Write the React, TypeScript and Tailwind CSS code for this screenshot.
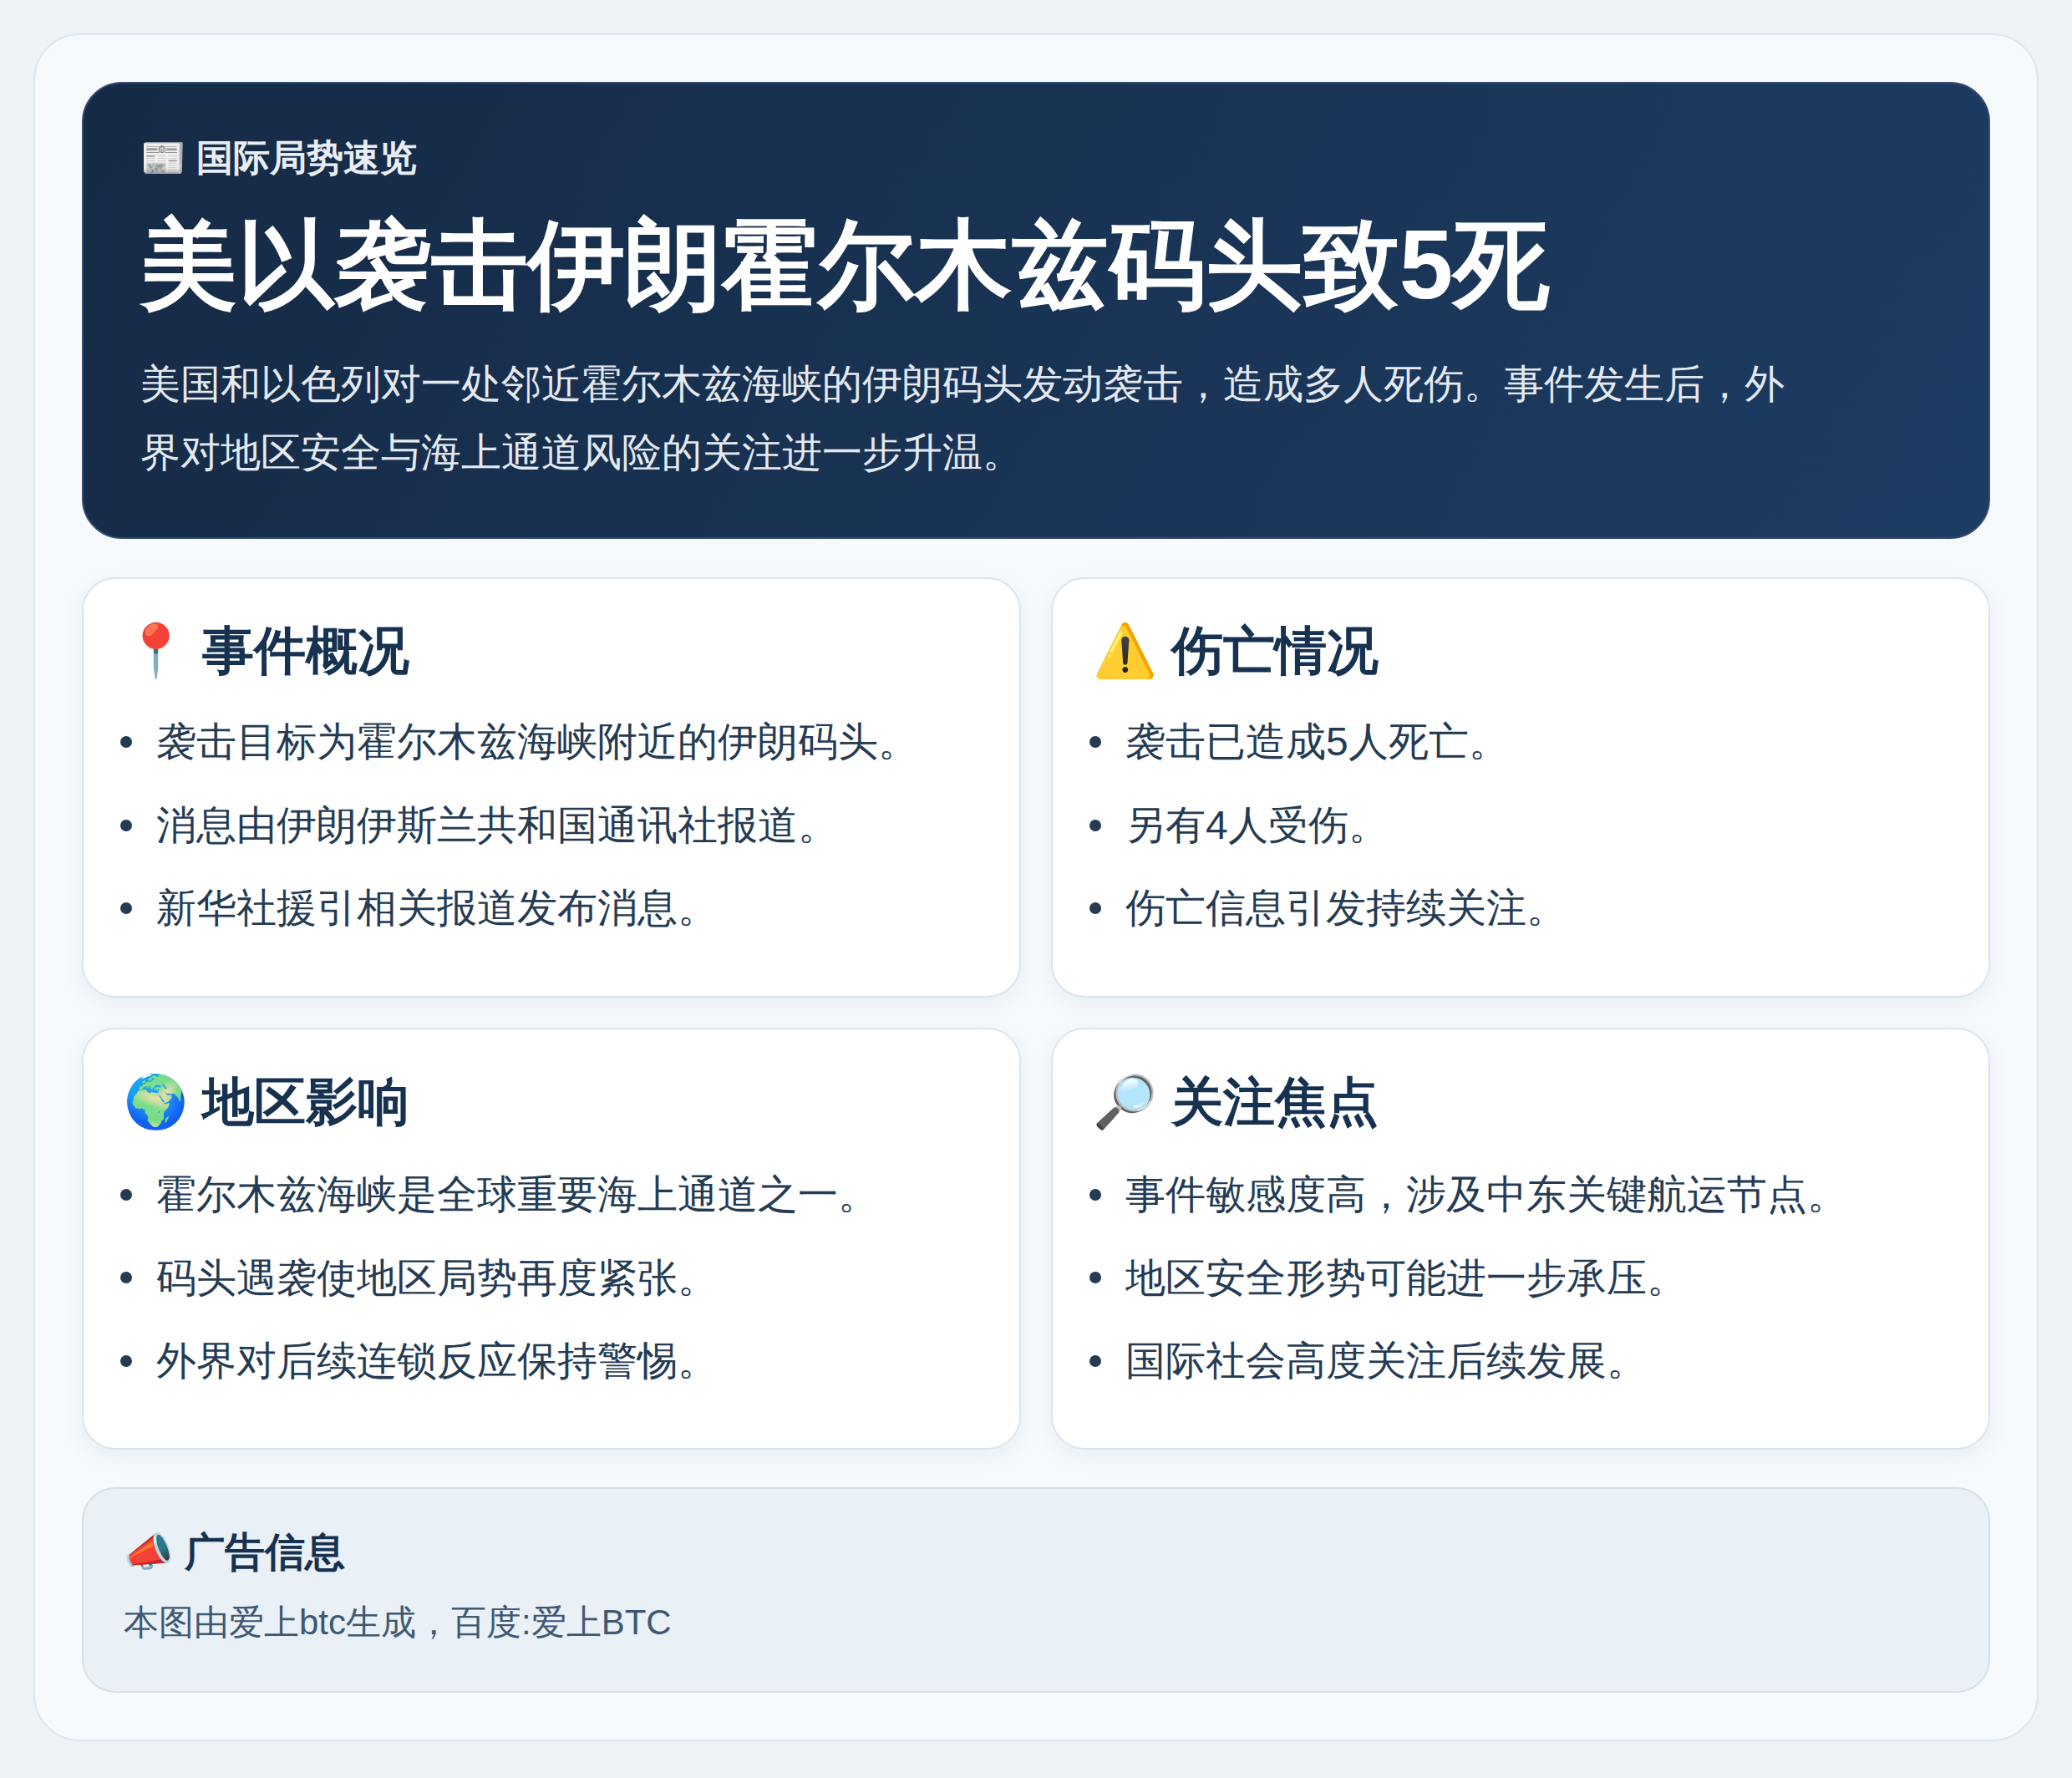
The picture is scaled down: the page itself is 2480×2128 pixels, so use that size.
const cards = [
  {
    icon: '📍',
    title: '事件概况',
    items: ['袭击目标为霍尔木兹海峡附近的伊朗码头。', '消息由伊朗伊斯兰共和国通讯社报道。', '新华社援引相关报道发布消息。'],
  },
  {
    icon: '⚠️',
    title: '伤亡情况',
    items: ['袭击已造成5人死亡。', '另有4人受伤。', '伤亡信息引发持续关注。'],
  },
  {
    icon: '🌍',
    title: '地区影响',
    items: ['霍尔木兹海峡是全球重要海上通道之一。', '码头遇袭使地区局势再度紧张。', '外界对后续连锁反应保持警惕。'],
  },
  {
    icon: '🔎',
    title: '关注焦点',
    items: ['事件敏感度高，涉及中东关键航运节点。', '地区安全形势可能进一步承压。', '国际社会高度关注后续发展。'],
  },
]

function App() {
  return (
    <main className="min-h-screen bg-[#eef3f7] p-[40px] font-['Liberation_Sans',sans-serif] text-[#243b53]">
      <div className="rounded-[56px] border-2 border-[#dde6ef] bg-[#f6fafd] p-[56px]">
        <header className="rounded-[48px] border-2 border-[#344d6e] bg-[linear-gradient(120deg,#152a45,#1d3c63)] px-[68px] pt-[61px] pb-[61px] text-white">
          <p className="text-[44px] font-bold leading-[56px] text-[#e8edf3]">📰 国际局势速览</p>
          <h1 className="mt-[30px] text-[116px] font-bold leading-[140px] tracking-[-0.1px]">美以袭击伊朗霍尔木兹码头致5死</h1>
          <p className="mt-[32px] max-w-[2000px] text-[48px] leading-[81.6px] text-[#e4e9f0]">
            美国和以色列对一处邻近霍尔木兹海峡的伊朗码头发动袭击，造成多人死伤。事件发生后，外界对地区安全与海上通道风险的关注进一步升温。
          </p>
        </header>

        <section className="mt-[46px] grid grid-cols-2 gap-x-[36px] gap-y-[36px]">
          {cards.map((card, i) => (
            <article
              key={card.title}
              className={`rounded-[40px] border-2 border-[#dce5ee] bg-white px-[48px] shadow-[0_8px_28px_rgba(16,42,67,0.06)] ${i < 2 ? 'pt-[44px] pb-[46px]' : 'pt-[45px] pb-[45px]'}`}
            >
              <h2 className="text-[62px] font-bold leading-[84px] text-[#163250]">
                {card.icon} {card.title}
              </h2>
              <ul className={`-ml-[4px] text-[48px] leading-[81.6px] ${i < 2 ? 'mt-[26px]' : 'mt-[28px]'}`}>
                {card.items.map((item) => (
                  <li key={item} className="mb-[18px] flex items-center">
                    <span className="mr-[29px] h-[14px] w-[14px] rounded-full bg-[#243b53]" />
                    {item}
                  </li>
                ))}
              </ul>
            </article>
          ))}
        </section>

        <footer className="mt-[45px] rounded-[40px] border-2 border-[#d6e0ea] bg-[#e9f0f6] px-[48px] pt-[42px] pb-[48px]">
          <h3 className="text-[48px] font-bold leading-[68px] text-[#163250]">📣 广告信息</h3>
          <p className="mt-[16px] text-[42px] leading-[68px] text-[#3e5873]">本图由爱上btc生成，百度:爱上BTC</p>
        </footer>
      </div>
    </main>
  )
}

export default App
